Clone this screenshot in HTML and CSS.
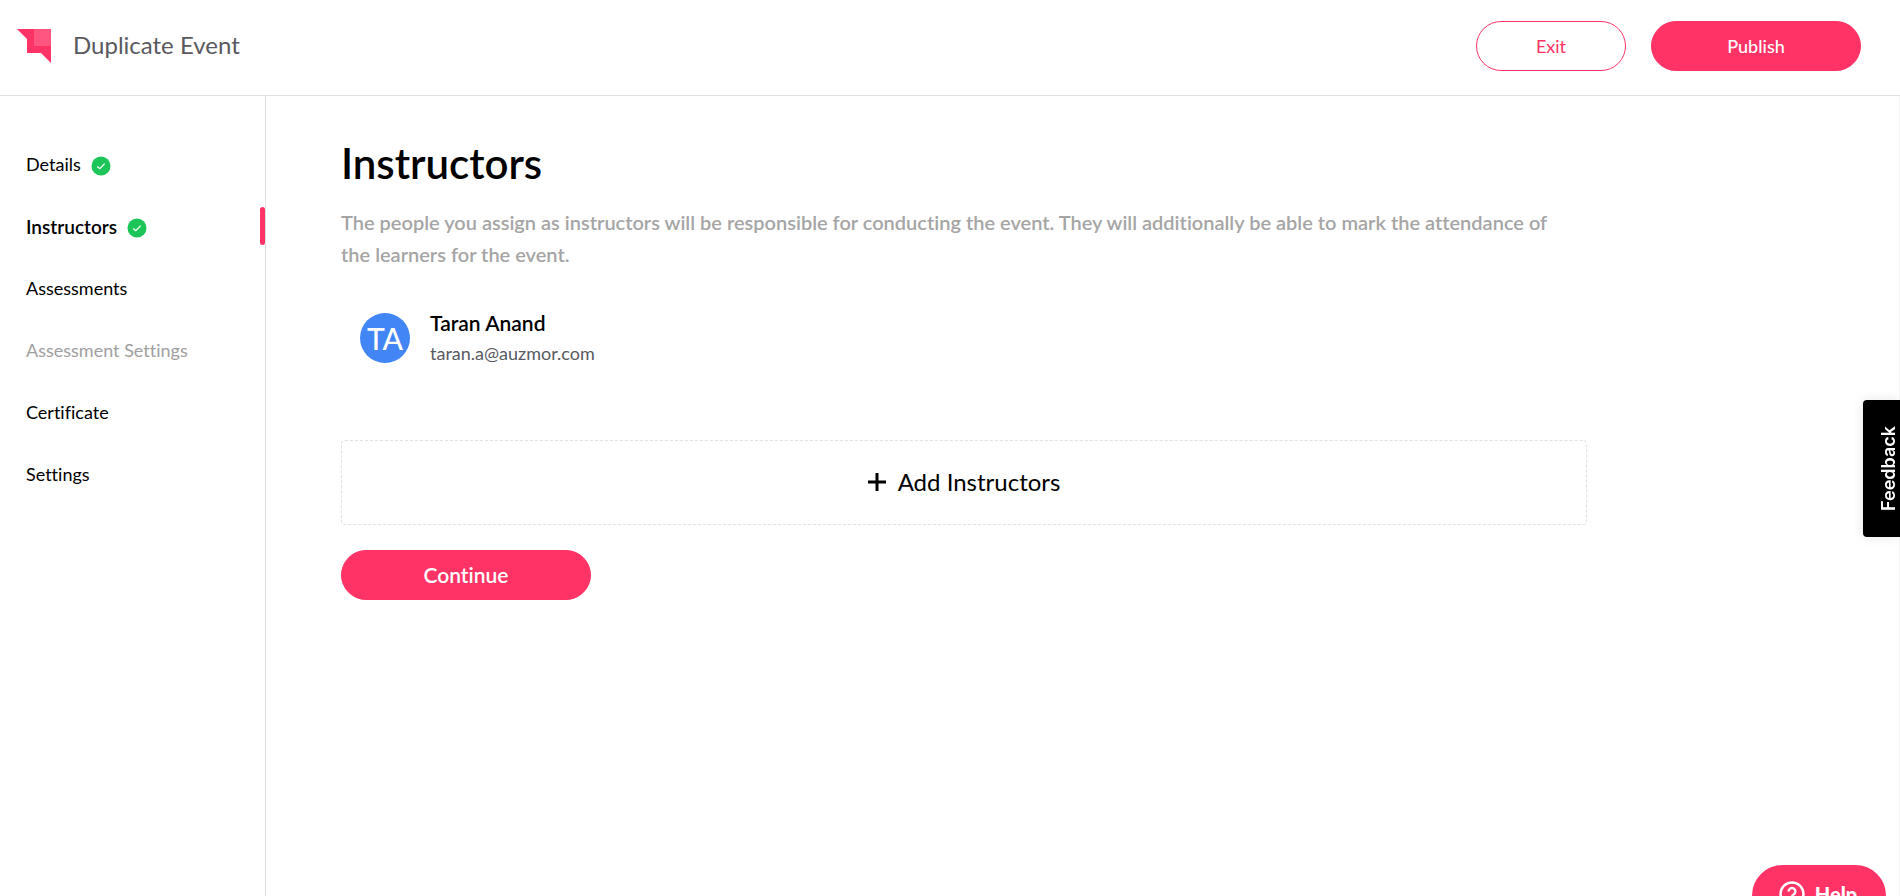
FILE: index.html
```html
<!DOCTYPE html>
<html lang="en">
<head>
    <meta charset="UTF-8">
    <meta name="viewport" content="width=device-width, initial-scale=1.0">
    <title>Duplicate Event - Instructors</title>
    <link rel="stylesheet" href="styles.css">
</head>
<body>
    <header class="header">
        <svg class="logo" viewBox="0 0 36 36" aria-hidden="true">
            <path fill="#ff3366" d="M1 1H35V35L25 25H11V11Z"/>
            <path fill="#ff5580" d="M18 1H35V18H18Z"/>
        </svg>
        <div class="header-title">Duplicate Event</div>
        <div class="header-actions">
            <button type="button" class="btn btn-outline">Exit</button>
            <button type="button" class="btn btn-publish">Publish</button>
        </div>
    </header>

    <div class="layout">
        <!-- Steps -->
        <nav class="sidebar">
            <ul class="steps">
                <li class="step">
                    <a href="#details">Details</a>
                    <svg class="check" viewBox="0 0 20 20" aria-hidden="true">
                        <circle cx="10" cy="10" r="9.5" fill="#1bc558"/>
                        <path d="M6.2 10.4L8.8 12.7L13.7 7.6" fill="none" stroke="#fff" stroke-width="1.3"/>
                    </svg>
                </li>
                <li class="step active">
                    <a href="#instructors">Instructors</a>
                    <svg class="check" viewBox="0 0 20 20" aria-hidden="true">
                        <circle cx="10" cy="10" r="9.5" fill="#1bc558"/>
                        <path d="M6.2 10.4L8.8 12.7L13.7 7.6" fill="none" stroke="#fff" stroke-width="1.3"/>
                    </svg>
                </li>
                <li class="step"><a href="#assessments">Assessments</a></li>
                <li class="step disabled"><a href="#assessment-settings">Assessment Settings</a></li>
                <li class="step"><a href="#certificate">Certificate</a></li>
                <li class="step"><a href="#settings">Settings</a></li>
            </ul>
        </nav>

        <!-- Main content -->
        <main class="content">
            <h1>Instructors</h1>
            <p class="description">The people you assign as instructors will be responsible for conducting the event. They will additionally be able to mark the attendance of the learners for the event.</p>

            <div class="instructor">
                <div class="avatar">TA</div>
                <div class="instructor-info">
                    <div class="instructor-name">Taran Anand</div>
                    <div class="instructor-email">taran.a@auzmor.com</div>
                </div>
            </div>

            <button type="button" class="add-btn">
                <svg class="plus" viewBox="0 0 18 18" aria-hidden="true">
                    <path d="M9 0V18M0 9H18" stroke="#000" stroke-width="3"/>
                </svg>
                Add Instructors
            </button>

            <button type="button" class="btn btn-continue">Continue</button>
        </main>
    </div>

    <button type="button" class="feedback">Feedback</button>

    <button type="button" class="help">
        <svg class="help-icon" viewBox="0 0 26 26" fill="none" stroke="#fff" stroke-width="2.4" aria-hidden="true">
            <circle cx="13" cy="13" r="11.5"/>
            <path d="M9.6 10.4a3.4 3.4 0 1 1 5.2 2.9c-1.2.8-1.8 1.3-1.8 2.6M13 18v2.4"/>
        </svg>
        Help
    </button>
</body>
</html>
```

FILE: styles.css
```css
* {
    margin: 0;
    padding: 0;
    box-sizing: border-box;
}

body {
    font-family: Lato, sans-serif;
    font-size: 18px;
    font-variant-ligatures: none;
    color: #000;
    background-color: #fff;
    min-height: 100vh;
    display: flex;
    flex-direction: column;
    overflow: hidden;
}

button {
    font-family: inherit;
    font-variant-ligatures: inherit;
    cursor: pointer;
}

/* Header */
.header {
    display: flex;
    align-items: center;
    padding: 21px 39px 24px 16px;
    border-bottom: 1px solid #e1e1e1;
}

.logo {
    width: 36px;
    height: 36px;
}

.header-title {
    margin-left: 21px;
    padding-bottom: 2px;
    font-size: 24px;
    line-height: 32px;
    color: #59595f;
}

.header-actions {
    display: flex;
    gap: 25px;
    margin-left: auto;
}

.btn {
    height: 50px;
    border: 1px solid #ff3366;
    border-radius: 25px;
    background-color: #ff3366;
    color: #fff;
    font-size: 18px;
}

.btn-outline {
    width: 150px;
    background-color: #fff;
    color: #ff3366;
}

.btn-publish {
    width: 210px;
    font-weight: 500;
}

.btn-continue {
    width: 250px;
    padding-bottom: 2px;
    font-size: 21px;
    font-weight: 600;
}

/* Sidebar */
.layout {
    display: flex;
    flex: 1;
    border-right: 1px solid #f4f4f4;
}

.sidebar {
    flex: 0 0 266px;
    padding-top: 49px;
    border-right: 1px solid #e1e1e1;
}

.steps {
    display: flex;
    flex-direction: column;
    gap: 24px;
    list-style: none;
}

.step {
    display: flex;
    align-items: center;
    gap: 10px;
    height: 38px;
    padding-left: 26px;
}

.step a {
    color: inherit;
    text-decoration: none;
}

.step.active {
    font-size: 19px;
    font-weight: 600;
}

.step.active::after {
    content: "";
    width: 5px;
    height: 38px;
    margin-left: auto;
    border-radius: 3px;
    background-color: #ff3366;
}

.step.disabled {
    color: #a0a0a0;
}

.check {
    width: 20px;
    height: 20px;
    margin-top: 4px;
}

/* Content */
.content {
    flex: 1;
    padding: 43px 312px 40px 75px;
}

h1 {
    font-size: 42px;
    font-weight: 600;
    line-height: 48px;
}

.description {
    margin-top: 19px;
    padding-right: 20px;
    font-size: 20px;
    font-weight: 600;
    line-height: 32px;
    color: #a5a5a5;
}

.instructor {
    display: flex;
    align-items: center;
    gap: 20px;
    margin-top: 38px;
    padding: 0 19px;
}

.avatar {
    display: flex;
    align-items: center;
    justify-content: center;
    width: 50px;
    height: 50px;
    border-radius: 50%;
    background-color: #4285f4;
    color: #fff;
    font-size: 30px;
    font-weight: 500;
}

.instructor-name {
    font-size: 21px;
    font-weight: 600;
    line-height: 30px;
}

.instructor-email {
    line-height: 30px;
    color: #59595f;
}

.add-btn {
    display: flex;
    align-items: center;
    justify-content: center;
    gap: 12px;
    width: 100%;
    height: 85px;
    margin: 72px 0 25px;
    padding-bottom: 2px;
    border: 1px dashed #e1e1e1;
    border-radius: 4px;
    background-color: #fff;
    color: #000;
    font-size: 24px;
}

.plus {
    width: 18px;
    height: 18px;
}

/* Floating widgets */
.feedback {
    position: fixed;
    right: 0;
    top: 400px;
    width: 37px;
    height: 137px;
    padding-left: 14px;
    border: none;
    border-radius: 4px 0 0 4px;
    background-color: #000;
    color: #fff;
    box-shadow: 0 0 12px rgba(0, 0, 0, 0.1);
    font-family: Inter, sans-serif;
    font-size: 18px;
    font-weight: 600;
    line-height: 22px;
    writing-mode: sideways-lr;
}

.help {
    position: fixed;
    right: 14px;
    bottom: -30px;
    display: flex;
    align-items: center;
    justify-content: center;
    gap: 10px;
    width: 134px;
    height: 61px;
    padding: 0 2px 4px 0;
    border: none;
    border-radius: 31px;
    background-color: #ff3366;
    color: #fff;
    font-size: 20px;
    font-weight: 900;
}

.help-icon {
    width: 26px;
    height: 26px;
}
```
